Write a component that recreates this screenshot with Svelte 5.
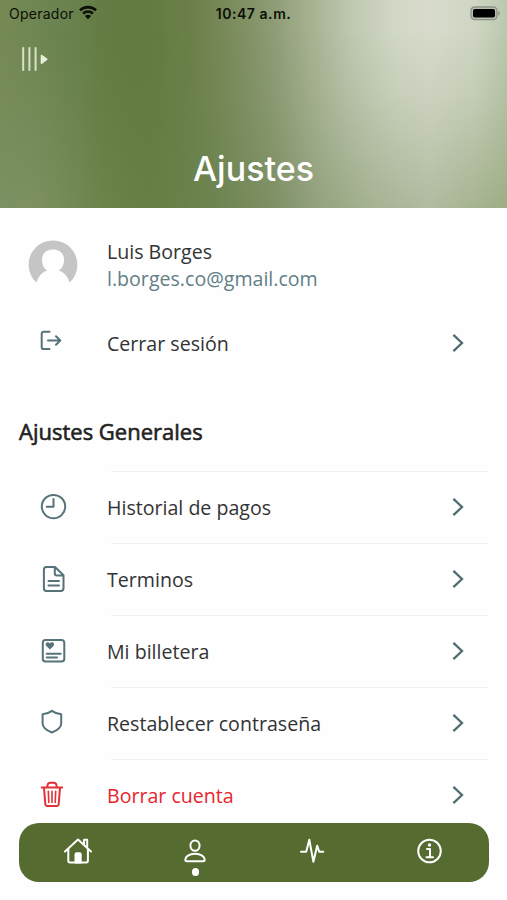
<script>
  const rows = [
    { icon: 'clock', label: 'Historial de pagos' },
    { icon: 'doc', label: 'Terminos' },
    { icon: 'wallet', label: 'Mi billetera' },
    { icon: 'shield', label: 'Restablecer contraseña' },
    { icon: 'trash', label: 'Borrar cuenta', danger: true }
  ];
</script>

{#snippet chevron()}
  <svg class="chevron" width="14" height="20" viewBox="0 0 14 20"><path d="M2.4 1.8 11 10 2.4 18.2" /></svg>
{/snippet}

<div class="screen">
  <header>
    <div class="status">
      <div class="carrier">
        <span>Operador</span>
        <svg width="20" height="15" viewBox="0 0 20 15">
          <path d="M2 5.4a11.3 11.3 0 0 1 16 0M5.1 8.6a6.9 6.9 0 0 1 9.8 0" fill="none" stroke="#0b0f06" stroke-width="2.6" />
          <path d="M10 14.2 6.9 11a4.4 4.4 0 0 1 6.2 0Z" fill="#0b0f06" />
        </svg>
      </div>
      <span class="time">10:47 a.m.</span>
      <svg class="battery" width="31" height="15" viewBox="0 0 31 15">
        <rect x="1" y="1" width="26" height="12.6" rx="3.6" fill="#b9c0ae" stroke="#8d9386" stroke-width="1.3" />
        <rect x="3" y="3" width="22" height="8.6" rx="1.8" fill="#000" />
        <path d="M28.4 5v4.6c2-.8 2-3.8 0-4.6Z" fill="#8d9386" />
      </svg>
    </div>
    <svg class="menu" width="28" height="26" viewBox="0 0 28 26">
      <path d="M2.2 2v22M8.4 2v22M14.6 2v22" stroke="#d6e3c8" stroke-width="2" stroke-linecap="round" />
      <path d="M20.600 9.600v7.400l5-3.700Z" fill="#e6f0db" stroke="#e6f0db" stroke-width="1.800" stroke-linejoin="round" />
    </svg>
    <h1>Ajustes</h1>
  </header>

  <section class="profile">
    <div class="cell">
      <svg width="50" height="50" viewBox="0 0 50 50">
        <path d="M8.300 42.600A24.400 24.400 0 1 1 41.700 42.600C40 37 36 32 30.800 30.500C34.500 28 36 24.500 36 19.500C36 13.500 31.500 9.500 25 9.500S14 13.500 14 19.500C14 24.500 15.500 28 19.200 30.500C14 32 10 37 8.300 42.600Z" fill="#c5c5c5" />
      </svg>
    </div>
    <div class="who">
      <div>Luis Borges</div>
      <div class="mail">l.borges.co@gmail.com</div>
    </div>
  </section>

  <div class="row logout">
    <div class="cell">
      <svg class="line" width="24" height="24" viewBox="0 0 24 24"><path d="M10 2.800H4.400Q2.200 2.800 2.200 5v12.900q0 2.200 2.200 2.200H10M8.500 11.500H20.500M16.500 7.300l4.300 4.200-4.300 4.200" /></svg>
    </div>
    <span class="label">Cerrar sesión</span>
    {@render chevron()}
  </div>

  <h2>Ajustes Generales</h2>

  <div class="list">
    {#each rows as row}
      <div class="row" class:danger={row.danger}>
        <div class="cell">
          <svg class="line" width="28" height="28" viewBox="0 0 28 28">
            {#if row.icon === 'clock'}
              <circle cx="14.500" cy="13.600" r="11.700" />
              <path d="M14.500 6.100V13.800H7.800" />
            {:else if row.icon === 'doc'}
              <path transform="translate(0.500 0)" d="M6.800 2H15.500L24 10.200V23.200Q24 26 21.200 26H6.800Q4.400 26 4.400 23.200V4.800Q4.400 2 6.800 2ZM15.300 2V8.400Q15.300 10.400 17.300 10.400H24M9 16H19.500M9 20.500H19.500" />
            {:else if row.icon === 'wallet'}
              <g transform="translate(0.500 0)">
                <rect x="3.300" y="3" width="21.500" height="21.600" rx="2.800" />
                <path d="M7.200 16.700H21.200M7.200 20.500H17.500" />
                <path class="solid" d="M10.400 12.600 6.800 9C5.300 7.200 6.700 5.200 8.400 5.200Q9.700 5.200 10.400 6.400Q11.100 5.200 12.400 5.200C14.100 5.200 15.500 7.200 14 9Z" />
              </g>
            {:else if row.icon === 'shield'}
              <path d="M12.900 1.900Q17 5 22.200 5.300V14.500C22.200 19 17.500 21.700 12.900 23.500C8.300 21.700 3.600 19 3.600 14.500V5.300Q8.800 5 12.900 1.900Z" />
            {:else}
              <path d="M2.700 6.400H23.200M5 6.800 6.300 23Q6.500 25.100 8.500 25.100H17.500Q19.500 25.100 19.700 23L21 6.800M8.300 6Q8.300 1.800 11.500 1.800H14.500Q17.700 1.800 17.700 6" />
              <path class="thin" d="M9.300 10.200 9.800 21.500M13 10.200V21.500M16.700 10.200 16.200 21.500" />
            {/if}
          </svg>
        </div>
        <span class="label">{row.label}</span>
        {@render chevron()}
      </div>
    {/each}
  </div>

  <nav>
    <div class="tab">
      <svg width="30" height="30" viewBox="0 0 30 30">
        <path d="M2 15.500 15 3.500 28 15.500M5.300 13V24.800Q5.300 26.500 7 26.500H23.200Q24.900 26.500 24.900 24.800V13M21 8.500V3.700H24.200V11.800" />
        <path class="fill" d="M12.500 26.500V18.500Q12.500 17.200 13.500 17.200H16.700Q17.700 17.200 17.700 18.500V26.500Z" />
      </svg>
    </div>
    <div class="tab">
      <svg width="30" height="30" viewBox="0 0 30 30">
        <ellipse cx="15" cy="9.600" rx="4.600" ry="5.200" />
        <path d="M15 17.700C21 17.700 24.700 20.800 24.700 23.700Q24.700 25.200 23 25.200H7Q5.300 25.200 5.300 23.700C5.300 20.800 9 17.700 15 17.700Z" />
      </svg>
      <i class="dot"></i>
    </div>
    <div class="tab">
      <svg width="30" height="30" viewBox="0 0 30 30"><path d="M4 15.800H9.200L12.300 3.800 16.400 25.800 20.200 9.800 22.200 15.800H26.300" /></svg>
    </div>
    <div class="tab">
      <svg width="30" height="30" viewBox="0 0 30 30">
        <circle cx="14.500" cy="15" r="11.300" />
        <path d="M12 13H15V21M11.500 21.200H18" />
        <circle class="fill nostroke" cx="14.500" cy="9" r="1.700" />
      </svg>
    </div>
  </nav>
</div>

<style>
  :global(body) { margin: 0; background: #fefefe; }
  .screen {
    position: relative;
    width: 507px;
    height: 900px;
    overflow: hidden;
    background: #fefefe;
    color: #333;
    font-family: "Open Sans", "Noto Sans", sans-serif;
    font-size: 19.600px;
  }
  svg { display: block; flex: none; }
  header {
    position: relative;
    isolation: isolate;
    box-sizing: border-box;
    height: 208px;
    background: linear-gradient(90deg, #768a55 0, #708753 30px, #6b8350 60px, #647c43 105px, #627a3f 130px, #647c42 160px, #6b8049 190px, #7a8b5c 230px, #8c9b73 270px, #a6b190 310px, #bec7b0 350px, #d1d8c6 395px, #d8dbcb 430px, #cfd6c4 475px, #bac8ad 507px);
  }
  header::after {
    content: "";
    position: absolute;
    inset: 0;
    z-index: -1;
    background: linear-gradient(90deg, #7b9163 0, #7d9061 35px, #748a56 70px, #6b8348 105px, #667e43 150px, #6d8450 215px, #7f9065 275px, #94a37f 320px, #a5b191 370px, #b0bba0 430px, #9fad85 507px);
    mask-image: linear-gradient(#0000 15%, #0004 45%, #000a 75%, #000 100%);
  }
  .status {
    display: grid;
    grid-template-columns: 1fr auto 1fr;
    align-items: center;
    height: 27px;
    padding: 0 6px 0 9px;
    color: #0b0f06;
    font-family: Inter, sans-serif;
    font-size: 14px;
  }
  .carrier { display: flex; align-items: center; gap: 4.500px; letter-spacing: 0.250px; }
  .carrier svg { margin-top: -2px; }
  .time { margin-left: -3px; font-weight: 600; letter-spacing: 0.550px; }
  .battery { justify-self: end; }
  .menu { margin: 19px 0 0 21px; }
  h1 {
    margin: 76px 0 0;
    text-align: center;
    color: #fff;
    font: 500 34px/42px Inter, sans-serif;
  }
  .cell { display: flex; justify-content: center; width: 107px; flex: none; }
  .cell svg { margin-left: -1.500px; }
  .profile { display: flex; align-items: center; height: 56px; margin-top: 29px; }
  .who { line-height: 27px; }
  .mail { color: #627f86; }
  .row { position: relative; display: flex; align-items: center; height: 72.100px; }
  .label { flex: 1; }
  .chevron { margin-right: 42px; fill: none; stroke: #4e6d73; stroke-width: 2.300; }
  .logout { height: 72px; margin-top: 14px; }
  .logout .cell { transform: translate(-1.500px, -2px); }
  .line { fill: none; stroke: #57737a; stroke-width: 2; stroke-linecap: round; stroke-linejoin: round; }
  .solid { fill: #57737a; stroke: none; }
  h2 {
    margin: 37px 0 0 19px;
    color: #222;
    font-size: 22px;
    font-weight: 400;
    line-height: 30px;
    -webkit-text-stroke: 0.600px #222;
  }
  .list { margin-top: 25px; }
  .list .row::before {
    content: "";
    position: absolute;
    left: 111px;
    right: 19px;
    top: 0;
    height: 1px;
    background: #f0f0f0;
  }
  .danger { color: #e8262d; }
  .danger .line { stroke: #e33135; }
  .line .thin { stroke-width: 1.600; }
  nav {
    position: absolute;
    left: 19px;
    top: 822.500px;
    display: flex;
    width: 469.500px;
    height: 59px;
    border-radius: 20px;
    background: #556b2f;
  }
  .tab { position: relative; flex: 1; display: flex; justify-content: center; align-items: center; }
  .tab svg { margin-top: -2px; fill: none; stroke: #fff; stroke-width: 2; stroke-linecap: round; stroke-linejoin: round; }
  .tab .fill { fill: #fff; }
  .tab .nostroke { stroke: none; }
  .dot { position: absolute; left: calc(50% - 3.500px); bottom: 6px; width: 7.500px; height: 7.500px; border-radius: 50%; background: #fff; }
</style>
